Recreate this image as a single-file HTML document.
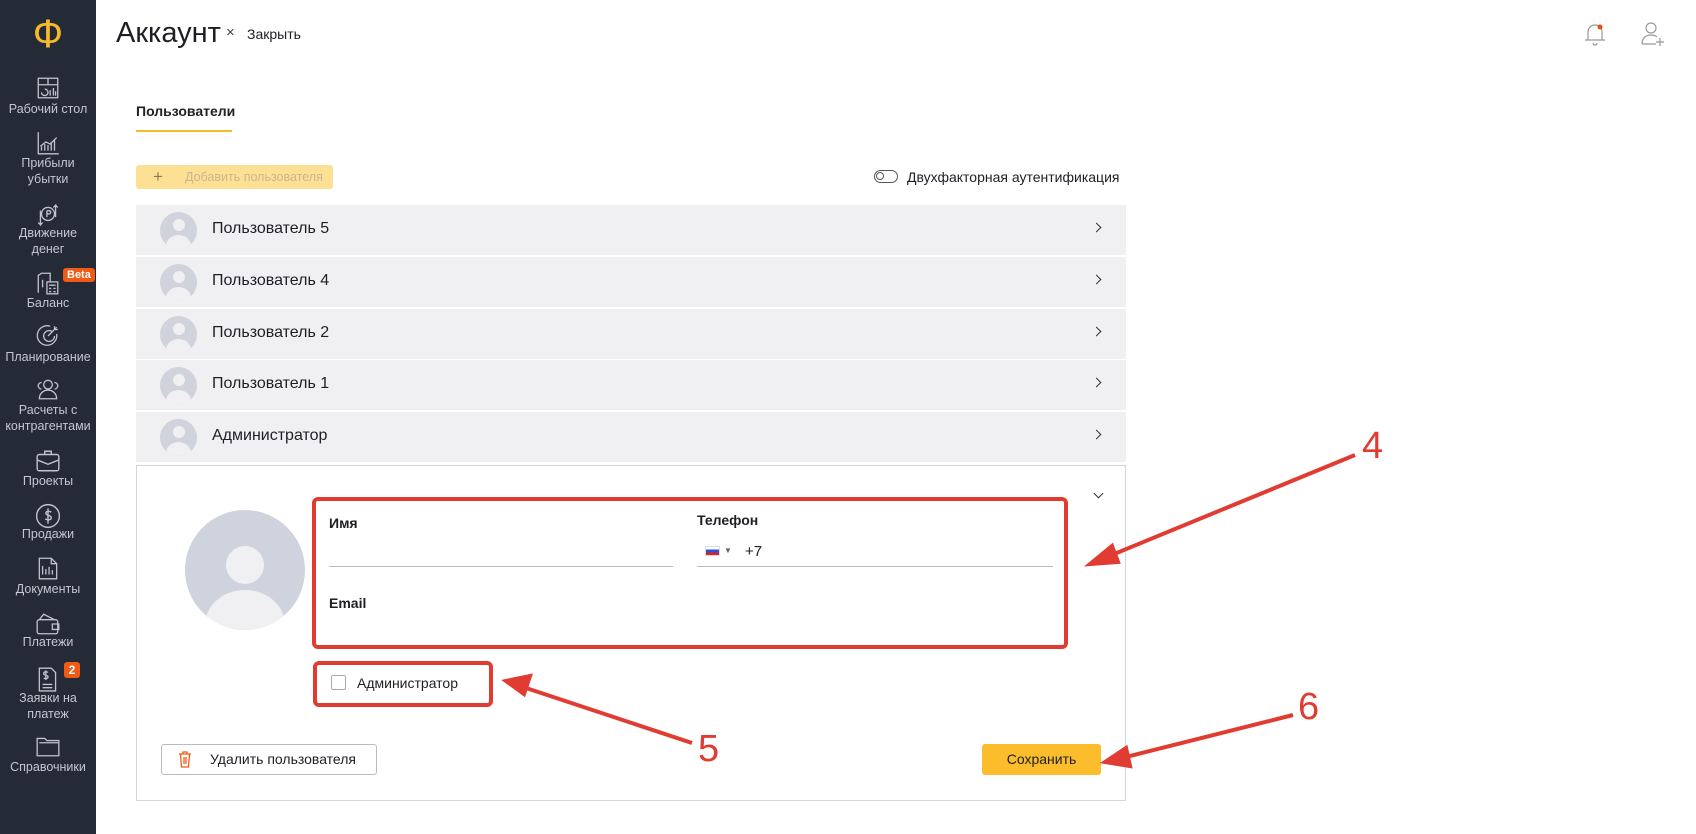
<!DOCTYPE html>
<html><head><meta charset="utf-8"><style>
*{margin:0;padding:0;box-sizing:border-box}
body{width:1696px;height:834px;overflow:hidden;background:#fff;font-family:"Liberation Sans","DejaVu Sans",sans-serif;color:#1d1f24;position:relative}
.a{position:absolute}
#sb{left:0;top:0;width:96px;height:834px;background:#252a37}
.lb{position:absolute;left:0;width:96px;text-align:center;color:#c3c7cf;font-size:12.5px;line-height:16px}
.ic{position:absolute;left:35px;width:26px;height:26px}
.row{position:absolute;left:136px;width:990px;height:50px;background:#f0f0f2}
.row .av{position:absolute;left:24px;top:7px;width:37px;height:37px;border-radius:50%;background:#d0d3dc;overflow:hidden}
.av:before{content:"";position:absolute;left:13px;top:7px;width:12px;height:12px;border-radius:50%;background:#f0f0f2}
.av:after{content:"";position:absolute;left:6px;top:23px;width:25px;height:22px;border-radius:50%;background:#f0f0f2}
.row span{position:absolute;left:76px;top:15px;font-size:16px}
.row i{position:absolute;right:26px;top:19px;width:7px;height:7px;border-right:1.3px solid #333;border-top:1.3px solid #333;transform:rotate(45deg)}
.red{position:absolute;border:4px solid #e13c32;border-radius:6px}
.num{position:absolute;color:#e13c32;font-size:38px;font-family:"Liberation Sans",sans-serif}
.fl{font-weight:bold;font-size:14px}
</style></head><body>
<div id="sb" class="a">
<div class="a" style="left:26px;top:12px;width:44px;text-align:center;color:#f6b92b;font-size:40px;line-height:44px">Ф</div>
<svg class="ic" style="top:75px" viewBox="0 0 24 24" fill="none" stroke="#bfc3cb" stroke-width="1.2"><rect x="3" y="3" width="18" height="18"/><path d="M3 9h18M12 3v6M6 16a3 3 0 1 0 3-3M14 14v5M17 12v7M19 15v4"/></svg>
<div class="lb" style="top:101px">Рабочий стол</div>
<svg class="ic" style="top:130px" viewBox="0 0 24 24" fill="none" stroke="#bfc3cb" stroke-width="1.2"><path d="M3 2v20h19M6 19v-4M9 19v-6M12 19v-5M15 19v-8M18 19v-10M5 15l5-4 4 2 6-6"/></svg>
<div class="lb" style="top:155px">Прибыли<br>убытки</div>
<svg class="ic" style="top:202px" viewBox="0 0 24 24" fill="none" stroke="#bfc3cb" stroke-width="1.2"><circle cx="12" cy="11" r="6"/><path d="M11 8v6M11 8h2a1.5 1.5 0 0 1 0 3h-2M19 14V3l-2 2M19 3l2 2M5 8v13l-2-2M5 21l2-2"/></svg>
<div class="lb" style="top:225px">Движение<br>денег</div>
<svg class="ic" style="top:270px" viewBox="0 0 24 24" fill="none" stroke="#bfc3cb" stroke-width="1.2"><path d="M3 21V5l3-2h8v8"/><rect x="11" y="11" width="10" height="11"/><path d="M13 14h6M13 17h2M17 17h2M13 20h2M17 20h2M7 9v7"/></svg>
<div class="a" style="left:63px;top:268px;background:#f05a14;color:#fff;font-size:11px;font-weight:bold;padding:1px 4px;border-radius:3px;line-height:12px">Beta</div>
<div class="lb" style="top:295px">Баланс</div>
<svg class="ic" style="top:323px" viewBox="0 0 24 24" fill="none" stroke="#bfc3cb" stroke-width="1.2"><path d="M20 10a9 9 0 1 1-6-7"/><path d="M16 8a5 5 0 1 0 2 4M12 12l8-8M18 3v3h3"/></svg>
<div class="lb" style="top:349px">Планирование</div>
<svg class="ic" style="top:376px" viewBox="0 0 24 24" fill="none" stroke="#bfc3cb" stroke-width="1.2"><circle cx="12" cy="8" r="4"/><path d="M4 21c0-5 4-8 8-8s8 3 8 8zM6 12a3 3 0 0 1 0-6M18 12a3 3 0 0 0 0-6"/></svg>
<div class="lb" style="top:402px">Расчеты с<br>контрагентами</div>
<svg class="ic" style="top:448px" viewBox="0 0 24 24" fill="none" stroke="#bfc3cb" stroke-width="1.3"><rect x="2" y="6" width="20" height="15" rx="2"/><path d="M9 6V3h6v3M2 11l10 4 10-4"/></svg>
<div class="lb" style="top:473px">Проекты</div>
<svg class="ic" style="top:503px" viewBox="0 0 24 24" fill="none" stroke="#bfc3cb" stroke-width="1.3"><circle cx="12" cy="12" r="10.5"/><path d="M15 8.5c-1-1-5-1.5-5 1s5 1.5 5 4-4 2.5-5.5 1M12 5v14"/></svg>
<div class="lb" style="top:526px">Продажи</div>
<svg class="ic" style="top:555px" viewBox="0 0 24 24" fill="none" stroke="#bfc3cb" stroke-width="1.2"><path d="M4 3h11l5 5v14H4zM15 3v5h5M7 10v8M10 13v5M13 11v7M16 14v4"/></svg>
<div class="lb" style="top:581px">Документы</div>
<svg class="ic" style="top:611px" viewBox="0 0 24 24" fill="none" stroke="#bfc3cb" stroke-width="1.2"><rect x="2" y="8" width="19" height="13" rx="2"/><path d="M4 8l4-5 10 5M16 12h6v5h-6z"/></svg>
<div class="lb" style="top:634px">Платежи</div>
<svg class="ic" style="top:666px" viewBox="0 0 24 24" fill="none" stroke="#bfc3cb" stroke-width="1.2"><path d="M4 2h11l4 4v17H4z"/><path d="M12 6c-1-1-4-1-4 1s4 1 4 3-3 2-4 1M10 4v9M7 17h9M7 20h9"/></svg>
<div class="a" style="left:64px;top:662px;background:#f05a14;color:#fff;font-size:12px;font-weight:bold;width:16px;height:16px;text-align:center;border-radius:3px;line-height:16px">2</div>
<div class="lb" style="top:690px">Заявки на<br>платеж</div>
<svg class="ic" style="top:733px" viewBox="0 0 24 24" fill="none" stroke="#bfc3cb" stroke-width="1.2"><path d="M2 5h7l2 2h11v14H2zM4 9h18"/></svg>
<div class="lb" style="top:759px">Справочники</div>
</div>

<div class="a" style="left:116px;top:17px;font-size:29px">Аккаунт</div>
<div class="a" style="left:226px;top:24px;font-size:15px;color:#444">×</div>
<div class="a" style="left:247px;top:26px;font-size:14px">Закрыть</div>
<svg class="a" style="left:1583px;top:21px" width="24" height="26" viewBox="0 0 24 26" fill="none" stroke="#999" stroke-width="1.2"><path d="M5 19v-8a7 7 0 0 1 14 0v8M2 19h20M10 22a2 2 0 0 0 4 0"/><circle cx="17" cy="6" r="2.5" fill="#f04a14" stroke="none"/></svg>
<svg class="a" style="left:1640px;top:21px" width="26" height="26" viewBox="0 0 26 26" fill="none" stroke="#999" stroke-width="1.2"><circle cx="11" cy="7" r="5"/><path d="M2 23c0-6 4-9 9-9 3 0 5 1 6 2M2 23h14M20 17v8M16 21h8"/></svg>

<div class="a" style="left:136px;top:103px;font-size:14px;font-weight:bold;color:#222">Пользователи</div>
<div class="a" style="left:136px;top:130px;width:96px;height:2px;background:#f6b92b"></div>

<div class="a" style="left:136px;top:165px;width:197px;height:24px;background:#fde094;border-radius:3px"></div>
<div class="a" style="left:153px;top:167px;font-size:17px;color:#8a7d5b">+</div>
<div class="a" style="left:185px;top:170px;font-size:12.5px;color:#c9b88f">Добавить пользователя</div>
<div class="a" style="left:874px;top:170px;width:24px;height:13px;border:1.3px solid #555;border-radius:7px"><div style="position:absolute;left:1px;top:1px;width:8px;height:8px;border-radius:50%;border:1.2px solid #555"></div></div>
<div class="a" style="left:907px;top:169px;font-size:14px">Двухфакторная аутентификация</div>

<div class="row" style="top:205px"><div class="av"></div><span>Пользователь 5</span><i></i></div>
<div class="row" style="top:257px"><div class="av"></div><span>Пользователь 4</span><i></i></div>
<div class="row" style="top:309px"><div class="av"></div><span>Пользователь 2</span><i></i></div>
<div class="row" style="top:360px"><div class="av"></div><span>Пользователь 1</span><i></i></div>
<div class="row" style="top:412px"><div class="av"></div><span>Администратор</span><i></i></div>

<div class="a" style="left:136px;top:465px;width:990px;height:336px;border:1px solid #d2d5de"></div>
<div class="a" style="left:1095px;top:490px;width:7px;height:7px;border-right:1.3px solid #333;border-bottom:1.3px solid #333;transform:rotate(45deg)"></div>
<div class="a" style="left:185px;top:510px;width:120px;height:120px;border-radius:50%;background:#cfd3dd;overflow:hidden">
<div class="a" style="left:41px;top:36px;width:38px;height:38px;border-radius:50%;background:#f0f0f3"></div>
<div class="a" style="left:20px;top:80px;width:80px;height:70px;border-radius:50%;background:#f0f0f3"></div></div>

<div class="red" style="left:312px;top:497px;width:756px;height:152px"></div>
<div class="a fl" style="left:329px;top:515px">Имя</div>
<div class="a" style="left:329px;top:566px;width:344px;height:1px;background:#bbb"></div>
<div class="a fl" style="left:697px;top:512px">Телефон</div>
<div class="a" style="left:705px;top:546px;width:15px;height:10px;background:linear-gradient(#fff 33%,#2d4fd6 33%,#2d4fd6 66%,#e02020 66%);border:1px solid #ddd"></div>
<div class="a" style="left:724px;top:546px;font-size:8px;color:#666">▼</div>
<div class="a" style="left:745px;top:543px;font-size:15px">+7</div>
<div class="a" style="left:697px;top:566px;width:356px;height:1px;background:#bbb"></div>
<div class="a fl" style="left:329px;top:595px">Email</div>

<div class="red" style="left:313px;top:661px;width:180px;height:46px"></div>
<div class="a" style="left:331px;top:675px;width:15px;height:15px;border:1.5px solid #aaa;border-radius:2px"></div>
<div class="a" style="left:357px;top:675px;font-size:14px">Администратор</div>

<div class="a" style="left:161px;top:744px;width:216px;height:31px;border:1px solid #bbb;border-radius:3px"></div>
<svg class="a" style="left:178px;top:751px" width="14" height="17" viewBox="0 0 14 17" fill="none" stroke="#f05a14" stroke-width="1.3"><path d="M1 3h12M5 3V1h4v2M2.5 3l1 13h7l1-13M6 6v7M8 6v7"/></svg>
<div class="a" style="left:210px;top:751px;font-size:14px">Удалить пользователя</div>
<div class="a" style="left:982px;top:744px;width:119px;height:31px;background:#fbbd2b;border-radius:3px;text-align:center;font-size:14px;line-height:31px">Сохранить</div>

<svg class="a" style="left:0;top:0" width="1696" height="834">
<g stroke="#e13c32" stroke-width="4" fill="#e13c32">
<line x1="1355" y1="455" x2="1102" y2="559"/><polygon points="1090,564 1112,546 1118,562" />
<line x1="692" y1="743" x2="520" y2="686"/><polygon points="506,681 530,676 524,694"/>
<line x1="1293" y1="715" x2="1118" y2="759"/><polygon points="1105,762 1126,748 1130,766"/>
</g></svg>
<div class="num" style="left:1362px;top:425px">4</div>
<div class="num" style="left:698px;top:728px">5</div>
<div class="num" style="left:1298px;top:686px">6</div>
</body></html>
